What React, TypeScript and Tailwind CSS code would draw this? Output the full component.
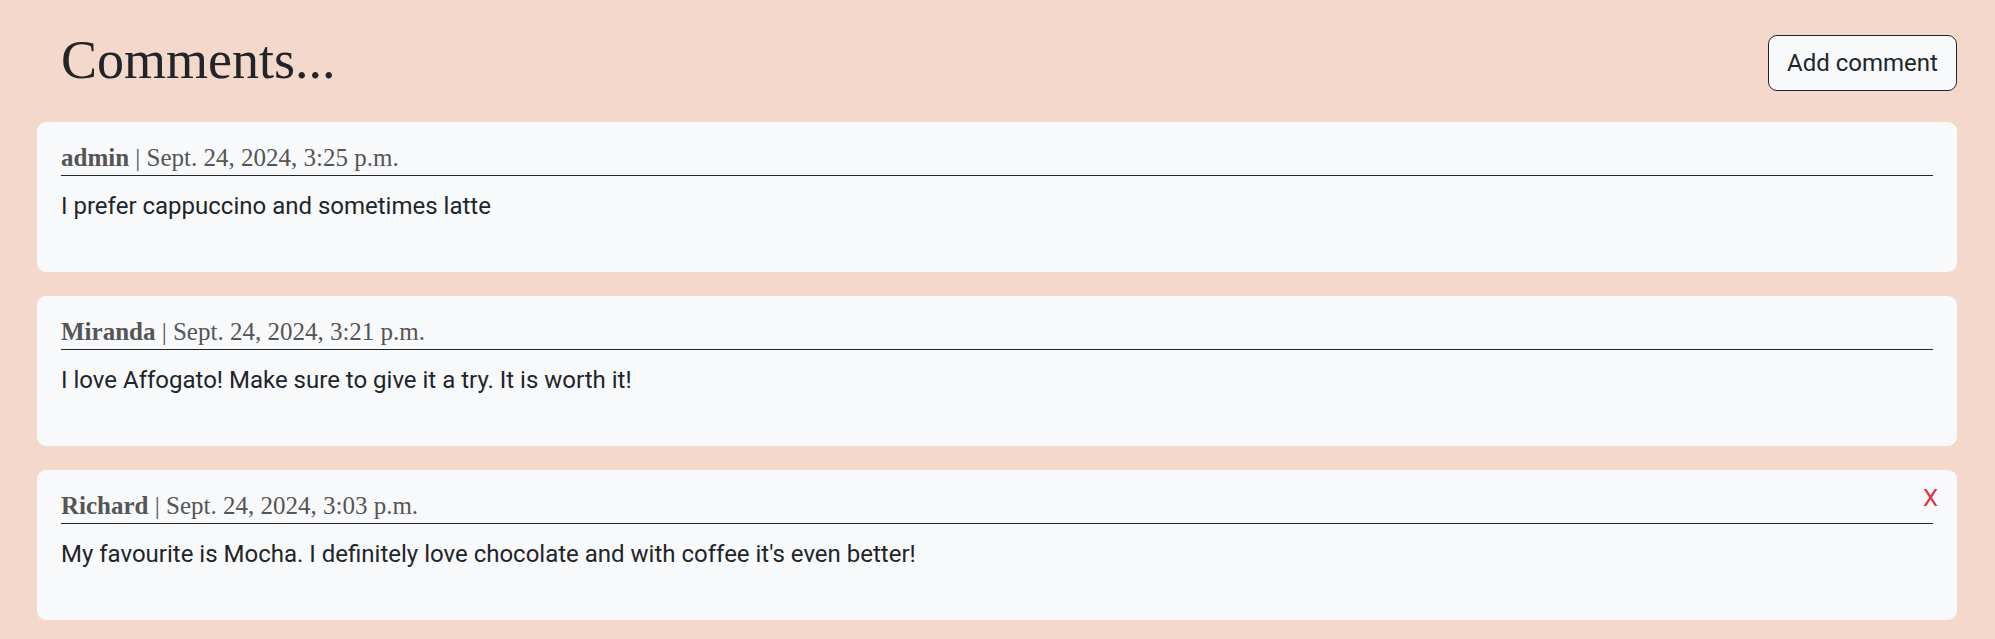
import React from 'react';

interface Comment {
  id: number;
  author: string;
  date: string;
  body: string;
  canDelete?: boolean;
}

const comments: Comment[] = [
  { id: 1, author: 'admin', date: 'Sept. 24, 2024, 3:25 p.m.', body: 'I prefer cappuccino and sometimes latte' },
  { id: 2, author: 'Miranda', date: 'Sept. 24, 2024, 3:21 p.m.', body: 'I love Affogato! Make sure to give it a try. It is worth it!' },
  {
    id: 3,
    author: 'Richard',
    date: 'Sept. 24, 2024, 3:03 p.m.',
    body: "My favourite is Mocha. I definitely love chocolate and with coffee it's even better!",
    canDelete: true,
  },
];

const serif = "font-['Liberation_Serif','DejaVu_Serif',serif]";
const sans = "font-['Roboto','Liberation_Sans',sans-serif]";

export default function App() {
  return (
    <div className="min-h-screen w-full bg-[#f3d8cb] text-[#212529]">
      <div className="pl-[37px] pr-[38px] pb-[20px]">
        {/* Header */}
        <div className="flex items-start justify-between pt-[28px]">
          <h1 className={`${serif} pl-[24px] text-[54px] leading-[64px] text-[#212529]`}>Comments...</h1>
          <button
            className={`${sans} mt-[7px] h-[56px] w-[189px] rounded-[9px] border border-[#212529] bg-[#f8f9fa] text-[24px] text-[#212529]`}
          >
            Add comment
          </button>
        </div>

        {/* Comment list */}
        <div className="mt-[30px] flex flex-col gap-[24px]">
          {comments.map((c) => (
            <div key={c.id} className="relative h-[150px] rounded-[9px] bg-[#f8f9fa] px-[24px] pt-[20px]">
              {c.canDelete && (
                <button className={`${sans} absolute right-[19px] top-[12px] text-[24px] leading-[32px] text-[#dc3545]`}>
                  X
                </button>
              )}
              <div className={`${serif} border-b border-[#212529] pb-[1px] text-[25px] leading-[32px] text-[#555]`}>
                <span className="font-bold">{c.author}</span> | {c.date}
              </div>
              <p className={`${sans} mt-[12px] text-[24px] leading-[36px] text-[#212529]`}>{c.body}</p>
            </div>
          ))}
        </div>
      </div>
    </div>
  );
}
